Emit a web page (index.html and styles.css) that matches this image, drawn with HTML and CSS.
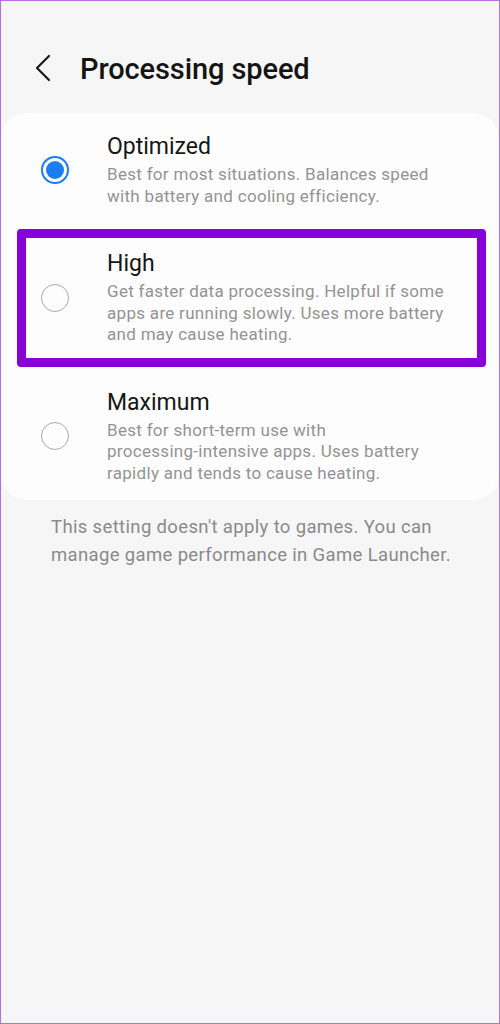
FILE: index.html
```html
<!DOCTYPE html>
<html lang="en">
<head>
  <meta charset="UTF-8">
  <title>Processing speed</title>
  <link rel="stylesheet" href="styles.css">
</head>
<body>

<div class="screen">
  <div class="header">
    <svg class="back" width="20" height="30" viewBox="0 0 20 30">
      <path d="M15 3 L3 15 L15 27" fill="none" stroke="#1a1a1a" stroke-width="2.2" stroke-linecap="round" stroke-linejoin="round"/>
    </svg>
    <h1 class="title">Processing speed</h1>
  </div>

  <div class="card">
    <div class="option">
      <span class="radio checked"></span>
      <div class="option-text">
        <div class="option-title">Optimized</div>
        <div class="option-desc">Best for most situations. Balances speed with battery and cooling efficiency.</div>
      </div>
    </div>

    <div class="option marked">
      <span class="radio"></span>
      <div class="option-text">
        <div class="option-title">High</div>
        <div class="option-desc">Get faster data processing. Helpful if some apps are running slowly. Uses more battery and may cause heating.</div>
      </div>
    </div>

    <div class="option">
      <span class="radio"></span>
      <div class="option-text">
        <div class="option-title">Maximum</div>
        <div class="option-desc">Best for short-term use with <span class="nowrap">processing-intensive</span> apps. Uses battery rapidly and tends to cause heating.</div>
      </div>
    </div>
  </div>

  <p class="note">This setting doesn't apply to games. You can manage game performance in Game Launcher.</p>
</div>

</body>
</html>
```

FILE: styles.css
```css
* {
  box-sizing: border-box;
}

body {
  margin: 0;
  font-family: Roboto, 'Noto Sans', sans-serif;
  background-color: #f6f6f6;
}

.screen {
  width: 500px;
  height: 1024px;
  border: 1.5px solid #b46ee2;
  background-color: #f6f6f6;
  overflow: hidden;
}

.header {
  display: flex;
  align-items: center;
  height: 112px;
  padding: 24px 0 0 33px;
}

.back {
  margin-right: 26px;
  margin-top: -2px;
}

.title {
  margin: 0;
  font-size: 29px;
  font-weight: 500;
  color: #141414;
  letter-spacing: -0.1px;
}

.card {
  display: flex;
  flex-direction: column;
  gap: 7px;
  background-color: #fdfdfd;
  border-radius: 26px;
}

.option {
  position: relative;
  display: flex;
  align-items: center;
  padding: 20px 34px 16px 40px;
}

.option.marked::after {
  content: '';
  position: absolute;
  top: -1px;
  bottom: -5px;
  left: 16px;
  right: 13px;
  border: 9px solid #8800d6;
  border-radius: 4px;
}

.radio {
  flex: none;
  width: 28px;
  height: 28px;
  border-radius: 50%;
  border: 1.5px solid #a9a9a9;
  margin-right: 38px;
  position: relative;
}

.radio.checked {
  border: 2px solid #1a7df3;
}

.radio.checked::before {
  content: '';
  position: absolute;
  top: 3px;
  left: 3px;
  width: 18px;
  height: 18px;
  border-radius: 50%;
  background-color: #1a7df3;
}

.option-title {
  font-size: 23px;
  line-height: 28px;
  color: #161616;
  margin-bottom: 3px;
}

.option-desc {
  font-size: 17px;
  line-height: 21.5px;
  letter-spacing: 0.3px;
  color: #939393;
}

.nowrap {
  white-space: nowrap;
}

.note {
  margin: 13px 30px 0 50px;
  font-size: 18.5px;
  line-height: 28px;
  letter-spacing: 0.35px;
  color: #8a8a8a;
}
```
